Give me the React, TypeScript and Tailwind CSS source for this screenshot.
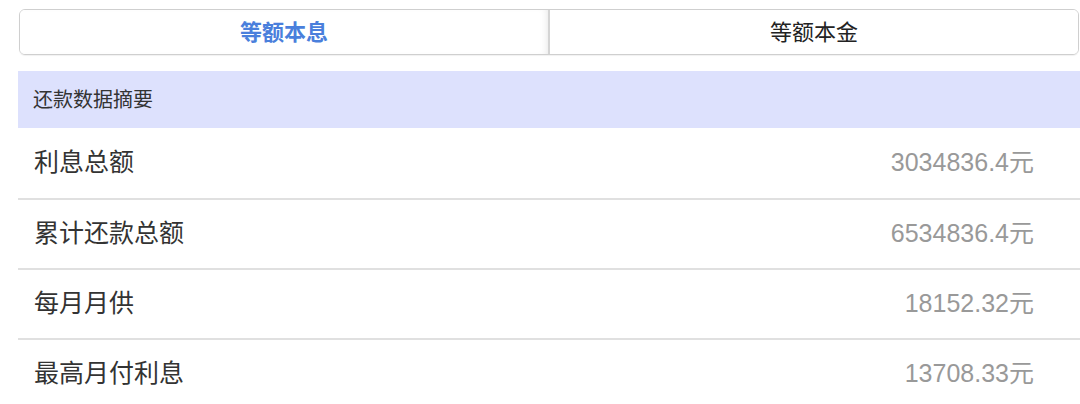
const rows = [
  { label: '利息总额', value: '3034836.4元' },
  { label: '累计还款总额', value: '6534836.4元' },
  { label: '每月月供', value: '18152.32元' },
  { label: '最高月付利息', value: '13708.33元' },
]

export default function App() {
  return (
    <div
      className="h-[404px] w-[1080px] overflow-hidden bg-white pl-[18px]"
      style={{ fontFamily: '"Liberation Sans", "Noto Sans CJK SC", sans-serif' }}
    >
      <div className="pt-[9px] pr-[1px] pl-[1px]">
        <div className="flex h-[46px] overflow-hidden rounded-[6px] border border-[#cfcfcf] shadow-[0_1px_1px_rgba(0,0,0,0.06)]">
          <button className="flex-1 border-r-2 border-[#d4d4d4] bg-white text-[22px] font-bold text-[#4a7fdc] shadow-[inset_-6px_0_8px_-6px_rgba(0,0,0,0.12)]">
            等额本息
          </button>
          <button className="flex-1 bg-white text-[22px] text-[#222]">等额本金</button>
        </div>
      </div>

      <div className="mt-[16px]">
        <div className="flex h-[57px] items-center bg-[#dde1fd] pl-[15px] text-[20px] text-[#333]">
          还款数据摘要
        </div>
        {rows.map((row, i) => (
          <div
            key={row.label}
            className={`flex h-[70px] items-center justify-between pr-[46px] pl-[16px] ${i > 0 ? 'border-t-2 border-[#e0e0e0]' : ''}`}
          >
            <span className="text-[25px] text-[#333]">{row.label}</span>
            <span className="text-[25px] text-[#999]">{row.value}</span>
          </div>
        ))}
      </div>
    </div>
  )
}
